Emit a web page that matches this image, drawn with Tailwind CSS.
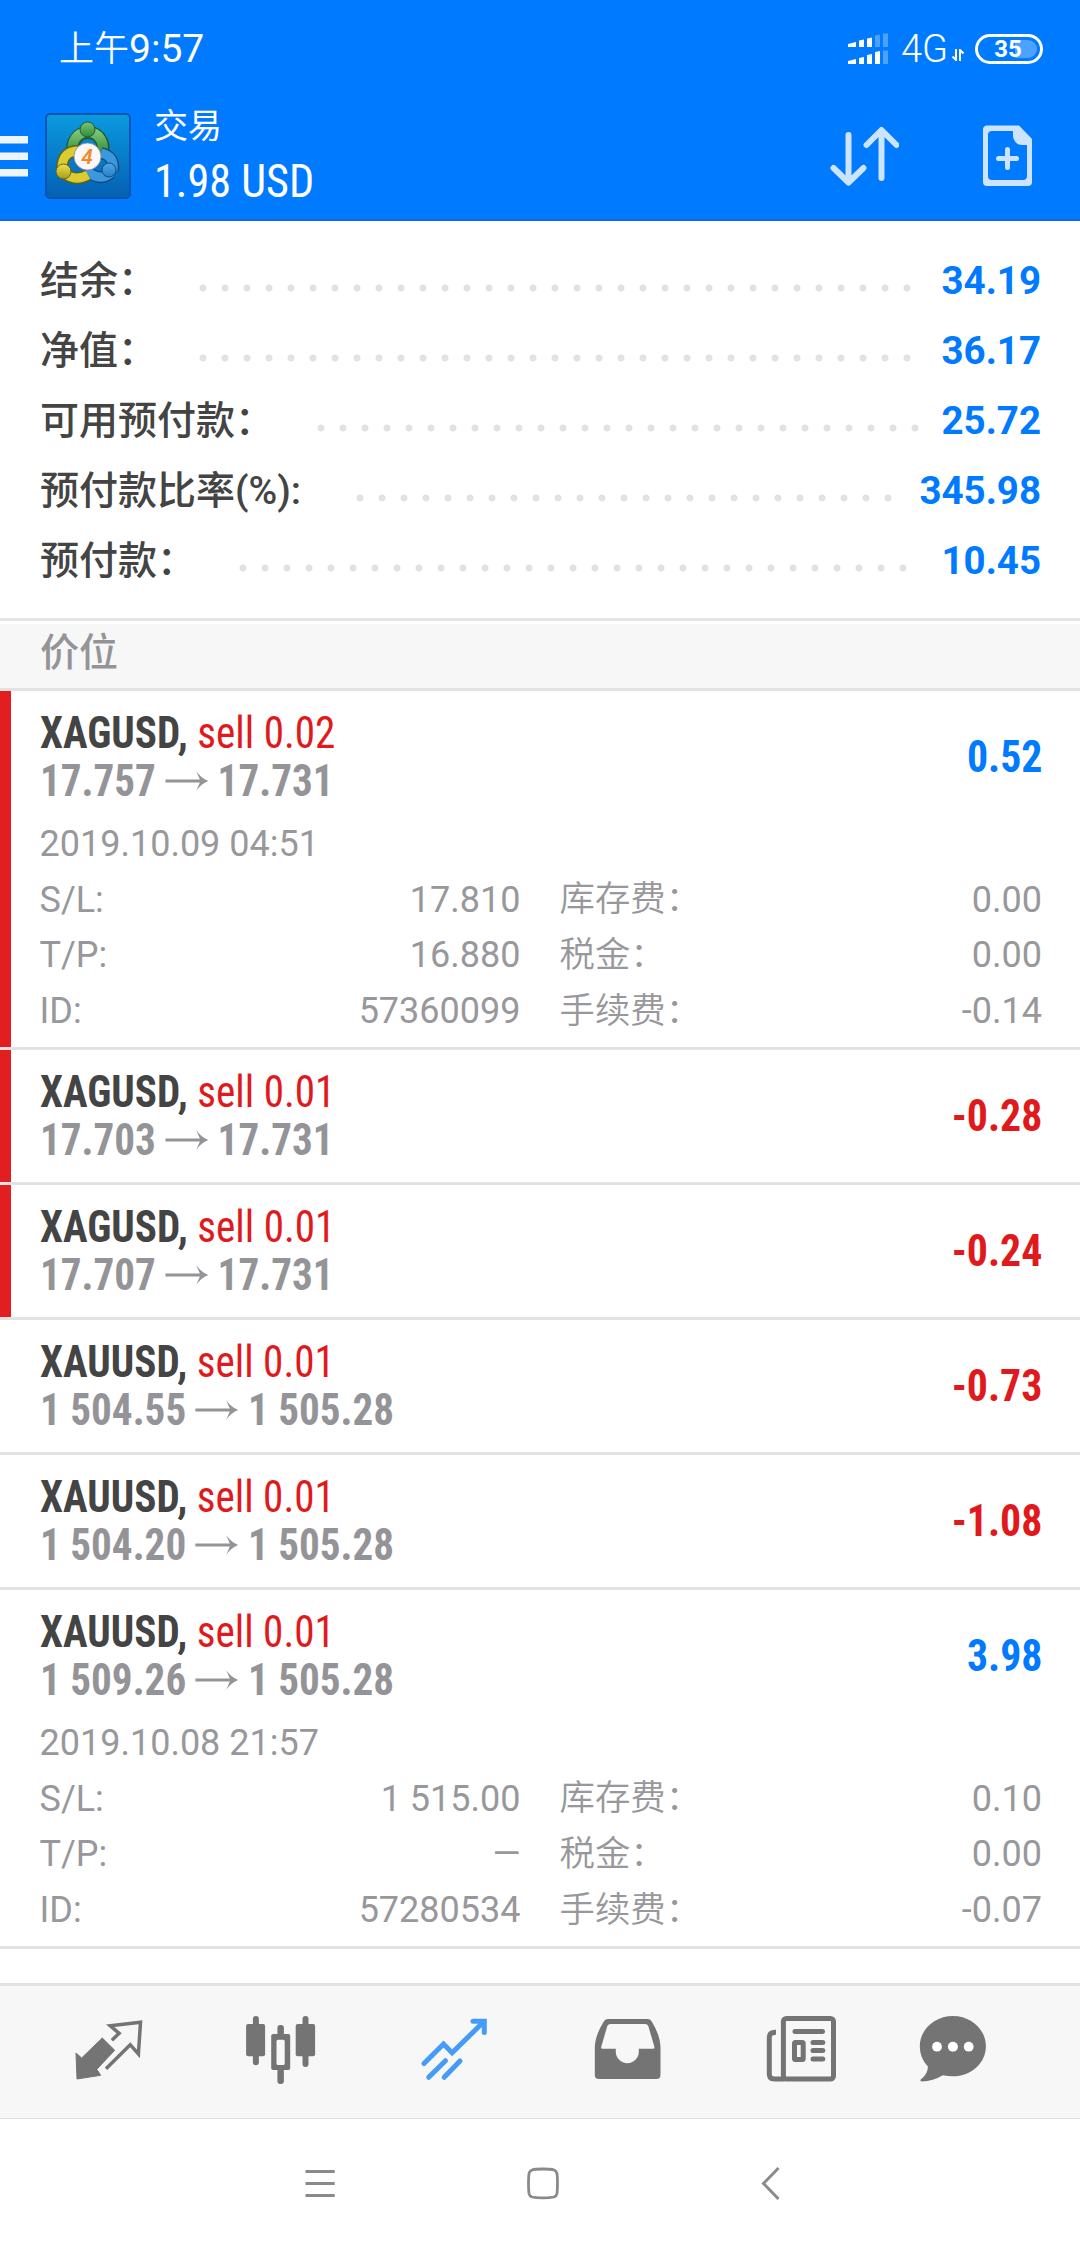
<!DOCTYPE html>
<html lang="zh-CN">
<head>
  <meta charset="utf-8"/>
  <meta content="width=device-width, initial-scale=1.0" name="viewport"/>
  <title>交易</title>
  <script src="https://cdn.jsdelivr.net/npm/@tailwindcss/browser@4"></script>
  <style>
    body {
      font-family: Roboto, 'Noto Sans CJK SC', sans-serif;
    }
    .condensed {
      font-family: 'Roboto Condensed', Roboto, sans-serif;
      font-stretch: 75%;
    }
  </style>
</head>
<body class="bg-white w-[1080px] h-[2248px] overflow-hidden flex flex-col">

  <!-- Header -->
  <header class="bg-[#007aff] text-white h-[221px] border-b-2 border-[#1768d8] shrink-0">
    <div class="flex items-center justify-between h-[98px] pl-[59px] pr-[37px]">
      <div class="flex items-center leading-none"><span class="text-[35px] font-[350]">上午</span><span class="text-[39px] font-normal">9:57</span></div>
      <div class="flex items-center">
        <svg class="w-10 h-8" viewBox="0 0 40 32" fill="#fff">
          <path d="M0 11l8-2v5H0zM11 7.500l5-1v7.500h-5zM19 5.500l5-1v9.500h-5zM0 28l8-2v5H0zM11 25l5-1v7h-5zM19 22l5-1v10h-5zM27 19l5-1v13h-5z"/>
          <path opacity=".3" d="M27 2.500l5-1v12.500h-5zM35 .500h5v13.500h-5zM35 17.500h5v13.500h-5z"/>
        </svg>
        <span class="text-[38px] leading-none ml-[13px] font-[350]">4G</span>
        <svg class="w-3 h-3 ml-1 mt-3" viewBox="0 0 12 12" fill="none" stroke="#fff" stroke-width="2"><path d="M4 0v11L.500 7.500M8 12V1l3.500 3.500"/></svg>
        <div class="relative ml-[11px] w-[68px] h-[30px] rounded-full border-[3px] border-white flex items-center justify-center">
          <div class="absolute right-[3px] top-[3px] w-[22px] h-[18px] bg-white/30 rounded-r-full"></div>
          <span class="relative text-[24px] leading-none font-bold -ml-[2px]">35</span>
        </div>
      </div>
    </div>
    <div class="flex items-center h-[115px]">
      <svg class="w-7 h-[42px]" viewBox="0 0 28 42" fill="#eef5ff"><path d="M0 1h28v7.500H0zM0 17.500h28v7.500H0zM0 34h28v7.500H0z"/></svg>
      <svg class="w-[86px] h-[86px] ml-[17px]" viewBox="0 0 86 86">
        <defs>
          <linearGradient id="bg" x1="0" y1="0" x2="0" y2="1"><stop offset="0" stop-color="#0a9ade"/><stop offset="1" stop-color="#0560b4"/></linearGradient>
          <linearGradient id="green" x1="0" y1="0" x2="0" y2="1"><stop offset="0" stop-color="#7cc576"/><stop offset="1" stop-color="#2c8a35"/></linearGradient>
          <linearGradient id="yellow" x1="0" y1="0" x2="0" y2="1"><stop offset="0" stop-color="#f0e04a"/><stop offset="1" stop-color="#a89a1c"/></linearGradient>
          <linearGradient id="blue" x1="0" y1="0" x2="0" y2="1"><stop offset="0" stop-color="#4fa8e4"/><stop offset="1" stop-color="#2a7fc8"/></linearGradient>
        </defs>
        <rect x="1" y="1" width="84" height="84" rx="4" fill="url(#bg)" stroke="#0a55b0" stroke-width="2"/>
        <path d="M29 40A15 15 0 1 1 56 42" fill="none" stroke="#1d5a35" stroke-width="13"/>
        <path d="M29 40A15 15 0 1 1 56 41" fill="none" stroke="url(#green)" stroke-width="10"/>
        <path d="M56 40Q70 43 68 58M66 60Q54 70 40 56" fill="none" stroke="#12497e" stroke-width="12"/>
        <path d="M56 40Q70 43 68 58M66 60Q54 70 40 56" fill="none" stroke="#3c98dc" stroke-width="9"/>
        <path d="M35 38Q17 37 17 56M19 60Q30 69 43 62" fill="none" stroke="#5c6414" stroke-width="12"/>
        <path d="M35 38Q17 37 17 56M19 60Q30 69 43 62" fill="none" stroke="#dccb34" stroke-width="9"/>
        <circle cx="42.500" cy="16.500" r="7.500" fill="url(#green)" stroke="#1d5a35"/>
        <circle cx="18.500" cy="58.500" r="7.500" fill="url(#yellow)" stroke="#5c6414"/>
        <circle cx="64" cy="57" r="7" fill="url(#blue)" stroke="#12497e"/>
        <circle cx="42.500" cy="43.500" r="13.500" fill="#fbf7f8" stroke="#8c8a9a" stroke-width=".8"/>
        <text x="42" y="51" text-anchor="middle" font-family="Roboto" font-size="21" font-weight="600" font-style="italic" fill="#f08a2c">4</text>
      </svg>
      <div class="ml-[23px] flex flex-col">
        <span class="text-[34px] leading-[50px]">交易</span>
        <span class="condensed text-[47px] leading-[60px] whitespace-nowrap origin-left scale-x-[0.94]">1.98 USD</span>
      </div>
      <svg class="ml-auto w-[70px] h-[62px]" viewBox="0 0 70 62" fill="none" stroke="#cce4ff" stroke-width="6" stroke-linecap="round" stroke-linejoin="round">
        <path d="M19.500 10v47M4.500 43l15 14.500 15-14.500M52.500 53V6M37.500 20l15-15 15 15"/>
      </svg>
      <svg class="ml-[83px] mr-[47px] w-[51px] h-[62px]" viewBox="0 0 51 62">
        <path fill="#cce4ff" fill-rule="evenodd" d="M5 .500h32L50 14v43a4 4 0 0 1-4 4H5a4 4 0 0 1-4-4V5A4 4 0 0 1 5 .500zM10 6a4 4 0 0 0-4 4v41a4 4 0 0 0 4 4h31a4 4 0 0 0 4-4V20h-5a9 9 0 0 1-9-9V6z"/>
        <path d="M25.500 24.500v18M16.500 33.500h18" stroke="#cce4ff" stroke-width="5" stroke-linecap="round"/>
      </svg>
    </div>
  </header>

  <!-- Account summary -->
  <section id="summary" class="h-[400px] pt-[25px] border-b-[3px] border-[#e5e5e5] shrink-0"></section>

  <div class="mt-[3px] h-[67px] bg-[#f7f7f7] border-b-[3px] border-[#e2e2e2] pl-10 text-[39px] leading-[58px] font-medium text-[#949498] shrink-0">价位</div>

  <!-- Open positions -->
  <main id="positions" class="h-[1292px] shrink-0"></main>

  <!-- Tabs -->
  <nav class="h-[136px] bg-[#f7f7f7] border-t-[3px] border-b border-t-[#e2e2e2] border-b-[#dedede] flex items-center pl-[21px] shrink-0 text-[#747474]">
    <div class="w-[173.5px] flex justify-center">
      <svg class="w-20 h-20" viewBox="68 42 80 80">
        <path d="M76 83l5.600 5 20.700-20 12.400 12.300-17.900 19 3.800 6L77 109z" fill="currentColor" stroke="currentColor" stroke-linejoin="round"/>
        <path d="M111.900 70.300l7.200-7-8.900-7.600 30.300-3.400-2.100 31.700-8.200-9.300-24.200 24" fill="none" stroke="currentColor" stroke-width="3.500"/>
      </svg>
    </div>
    <div class="w-[173.5px] flex justify-center">
      <svg class="w-20 h-20" viewBox="241.500 42 80 80" fill="currentColor">
        <rect x="246.600" y="54" width="19" height="32.300" rx="2"/><rect x="253.400" y="46" width="6" height="49.300" rx="3"/>
        <rect x="296.200" y="54" width="19.400" height="32.300" rx="2"/><rect x="303" y="46" width="6" height="51" rx="3"/>
        <rect x="277.900" y="55" width="6.500" height="12" rx="3"/><rect x="277.900" y="98" width="6.500" height="16" rx="3"/>
        <path fill-rule="evenodd" d="M273.700 64h15a2 2 0 0 1 2 2v32a2 2 0 0 1-2 2h-15a2 2 0 0 1-2-2V66a2 2 0 0 1 2-2zM278.500 69.700a1.500 1.500 0 0 0-1.500 1.500v22.300a1.500 1.500 0 0 0 1.500 1.500h5.200a1.500 1.500 0 0 0 1.500-1.500V71.200a1.500 1.500 0 0 0-1.500-1.500z"/>
      </svg>
    </div>
    <div class="w-[173.5px] flex justify-center text-[#449bf8]">
      <svg class="w-20 h-20" viewBox="415 42 80 80" fill="none" stroke="currentColor" stroke-width="5" stroke-linecap="round">
        <path d="M424 93.500L443.500 74l8.600 8.700L483.500 52"/>
        <path d="M473 51.300h11.300v11.200"/>
        <path d="M445.500 90.700l-16.800 16.600M460 91l-15.800 16.300"/>
      </svg>
    </div>
    <div class="w-[173.5px] flex justify-center">
      <svg class="w-20 h-20" viewBox="588 42 80 80">
        <path fill="currentColor" fill-rule="evenodd" d="M608 49h39.500q3 0 4.500 3 8.500 14 8.500 26v27a4 4 0 0 1-4 4h-57.700a4 4 0 0 1-4-4V78q0-12 8.700-26 1.500-3 4.500-3zM610.500 54q-2.300 0-3.200 2L601.300 76.500q-.500 2.200 1.200 2.200h13.300v3a11.500 11.500 0 0 0 23 0v-3h14.300q1.700 0 1.200-2.200L648.300 56q-.900-2-3.200-2z"/>
      </svg>
    </div>
    <div class="w-[173.5px] flex justify-center">
      <svg class="w-20 h-20" viewBox="761.500 42 80 80" fill="none" stroke="currentColor" stroke-width="5">
        <rect x="782.900" y="48.500" width="50.100" height="60.500" rx="3"/>
        <path d="M775.500 62.300q-6.700 0-6.700 5v36.700q0 5 5 5h10"/>
        <path d="M794.500 61.500h27.500M812.500 72.500h9.800M812.500 80.500h9.800M812.500 89h9.800" stroke-linecap="round"/>
        <rect x="794" y="72.500" width="8.700" height="17" rx="1"/>
      </svg>
    </div>
    <div class="w-[126px] flex justify-center">
      <svg class="w-20 h-20" viewBox="912 42 80 80" fill="currentColor">
        <path d="M952.900 46c18.300 0 33 13.500 33 30.200s-14.700 30.100-33 30.100q-5 0-10-1-10 6-21 6.200-3.200-.800 0-3 6-5 6-12-8.100-8.300-8.100-20.300c0-16.700 14.800-30.200 33.100-30.200z"/>
        <g fill="#fff"><circle cx="937" cy="76.700" r="4.900"/><circle cx="952.900" cy="76.700" r="5"/><circle cx="968.700" cy="76.700" r="4.900"/></g>
      </svg>
    </div>
  </nav>

  <!-- System navigation -->
  <div class="flex-1 flex items-center pl-[300px] text-[#8a8a8a]">
    <svg class="w-10 h-10" viewBox="0 0 40 40" stroke="currentColor" stroke-width="3"><path d="M5.500 7.500h29.200M5.500 19.500h29.200M5.500 31.500h29.200"/></svg>
    <svg class="w-10 h-10 ml-[183px]" viewBox="0 0 40 40" fill="none" stroke="currentColor" stroke-width="2.800"><path d="M20 5q8 0 11 1 2.500 1 3 3.500.500 4 .500 10t-.500 10q-.500 2.500-3 3.500-3 .800-11 .800t-11-.800q-2.500-1-3-3.500-.500-4-.500-10t.500-10Q6.500 7 9 6q3-1 11-1z"/></svg>
    <svg class="w-10 h-10 ml-[187px]" viewBox="0 0 40 40" fill="none" stroke="currentColor" stroke-width="3"><path d="M28.500 4L13.500 19.500 28.500 35"/></svg>
  </div>

  <script>
    // dots: [label column width, leader width]
    const summary = [
      { label: '结余：', value: '34.19', dots: [152, 726] },
      { label: '净值：', value: '36.17', dots: [152, 726] },
      { label: '可用预付款：', value: '25.72', dots: [269.5, 616] },
      { label: '预付款比率(%):', value: '345.98', dots: [308.5, 550] },
      { label: '预付款：', value: '10.45', dots: [191.5, 682] },
    ];

    const positions = [
      { symbol: 'XAGUSD', lots: '0.02', from: '17.757', to: '17.731', profit: '0.52', marked: true,
        open: '2019.10.09 04:51', sl: '17.810', tp: '16.880', id: '57360099', swap: '0.00', tax: '0.00', fee: '-0.14' },
      { symbol: 'XAGUSD', lots: '0.01', from: '17.703', to: '17.731', profit: '-0.28', marked: true },
      { symbol: 'XAGUSD', lots: '0.01', from: '17.707', to: '17.731', profit: '-0.24', marked: true },
      { symbol: 'XAUUSD', lots: '0.01', from: '1 504.55', to: '1 505.28', profit: '-0.73' },
      { symbol: 'XAUUSD', lots: '0.01', from: '1 504.20', to: '1 505.28', profit: '-1.08' },
      { symbol: 'XAUUSD', lots: '0.01', from: '1 509.26', to: '1 505.28', profit: '3.98',
        open: '2019.10.08 21:57', sl: '1 515.00', tp: '—', id: '57280534', swap: '0.10', tax: '0.00', fee: '-0.07' },
    ];

    document.getElementById('summary').innerHTML = summary.map(row => `
      <div class="flex items-center h-[70px] pl-10 pr-[39px] text-[39px] font-medium">
        <span class="shrink-0 whitespace-nowrap text-[#444444]" style="width:${row.dots[0]}px">${row.label}</span>
        <span class="shrink-0 h-[22px] mt-[13px] bg-[radial-gradient(circle,#e2e2e2_3px,transparent_4px)] bg-[length:22px_22px]" style="width:${row.dots[1]}px"></span>
        <span class="ml-auto text-[38.5px] font-bold text-[#007aff]">${row.value}</span>
      </div>
    `).join('');

    const detail = (left, leftValue, right, rightValue) => `
      <div class="flex h-[55.6px] items-center">
        <span class="w-[200px]">${left}</span>
        <span class="w-[281px] text-right">${leftValue}</span>
        <span class="ml-[39px] text-[35.4px] font-[350]">${right}</span>
        <span class="ml-auto">${rightValue}</span>
      </div>
    `;

    document.getElementById('positions').innerHTML = positions.map(p => `
      <div class="border-b-[3px] border-[#e2e2e2] flex ${p.open ? 'h-[359px]' : 'h-[135px]'}">
        <div class="w-[11px] shrink-0 ${p.marked ? 'bg-[#e31e20]' : ''}"></div>
        <div class="flex-1 pl-[28.5px] pr-[38px]">
          <div class="flex items-center justify-between h-[132px]">
            <div class="condensed text-[44px] leading-[48px] whitespace-nowrap origin-left scale-x-[0.935]">
              <div class="text-[#e01a1c]"><b class="text-[#444444]">${p.symbol},</b> sell ${p.lots}</div>
              <div class="flex items-center font-bold text-[#949498]">
                ${p.from}
                <svg class="w-[46px] h-5 mx-[10px]" viewBox="0 0 46 20" fill="currentColor"><path d="M0 8.500h37L33 0q5 7 13 10-8 3-13 10l4-8.500H0z"/></svg>
                ${p.to}
              </div>
            </div>
            <div class="condensed text-[44px] font-bold origin-right scale-x-[0.95] ${p.profit.startsWith('-') ? 'text-[#e01a1c]' : 'text-[#007aff]'}">${p.profit}</div>
          </div>
          ${p.open ? `
          <div class="text-[36px] font-normal text-[#98989c] -mt-[6.500px]">
            <div class="flex h-[55.6px] items-center">${p.open}</div>
            ${detail('S/L:', p.sl, '库存费：', p.swap)}
            ${detail('T/P:', p.tp, '税金：', p.tax)}
            ${detail('ID:', p.id, '手续费：', p.fee)}
          </div>` : ''}
        </div>
      </div>
    `).join('');
  </script>
</body>
</html>
